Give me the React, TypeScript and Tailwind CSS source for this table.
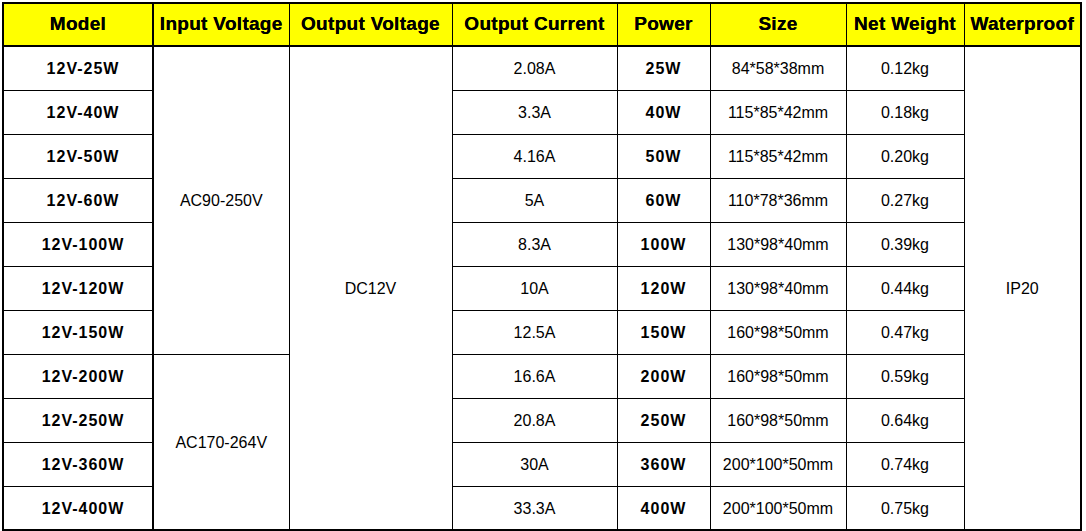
const rows = [
  { model: '12V-25W', current: '2.08A', power: '25W', size: '84*58*38mm', weight: '0.12kg' },
  { model: '12V-40W', current: '3.3A', power: '40W', size: '115*85*42mm', weight: '0.18kg' },
  { model: '12V-50W', current: '4.16A', power: '50W', size: '115*85*42mm', weight: '0.20kg' },
  { model: '12V-60W', current: '5A', power: '60W', size: '110*78*36mm', weight: '0.27kg' },
  { model: '12V-100W', current: '8.3A', power: '100W', size: '130*98*40mm', weight: '0.39kg' },
  { model: '12V-120W', current: '10A', power: '120W', size: '130*98*40mm', weight: '0.44kg' },
  { model: '12V-150W', current: '12.5A', power: '150W', size: '160*98*50mm', weight: '0.47kg' },
  { model: '12V-200W', current: '16.6A', power: '200W', size: '160*98*50mm', weight: '0.59kg' },
  { model: '12V-250W', current: '20.8A', power: '250W', size: '160*98*50mm', weight: '0.64kg' },
  { model: '12V-360W', current: '30A', power: '360W', size: '200*100*50mm', weight: '0.74kg' },
  { model: '12V-400W', current: '33.3A', power: '400W', size: '200*100*50mm', weight: '0.75kg' },
];

const headers = [
  'Model',
  'Input Voltage',
  'Output Voltage',
  'Output Current',
  'Power',
  'Size',
  'Net Weight',
  'Waterproof',
];

const cell = 'border border-black p-0 text-center align-middle';
const td = `${cell} pt-[2px]`;

export default function App() {
  return (
    <div className="h-[531px] w-[1086px] overflow-hidden bg-white pt-[2px] pl-[2px] font-['Liberation_Sans',Arial,sans-serif] text-black">
      <table className="w-[1078px] table-fixed border-collapse border-2 border-black">
        <colgroup>
          <col className="w-[150px]" />
          <col className="w-[136px]" />
          <col className="w-[163px]" />
          <col className="w-[165px]" />
          <col className="w-[93px]" />
          <col className="w-[136px]" />
          <col className="w-[118px]" />
          <col className="w-[117px]" />
        </colgroup>
        <thead>
          <tr className="h-[43px] bg-[#ffff00]">
            {headers.map((h, i) => (
              <th
                key={h}
                className={`${cell} border-b-2 text-[19px] font-bold tracking-[0.3px] whitespace-nowrap [text-shadow:0_0_0.6px_#000] ${
                  i === 0 ? 'border-r-2' : ''
                }`}
              >
                {h}
              </th>
            ))}
          </tr>
        </thead>
        <tbody className="text-[16px]">
          {rows.map((r, i) => (
            <tr key={r.model} className="h-[44px]">
              <td className={`${td} border-r-2 pl-[10px] font-bold tracking-[1px]`}>
                {r.model}
              </td>
              {i === 0 && (
                <td rowSpan={7} className={`${td} border-l-2`}>
                  AC90-250V
                </td>
              )}
              {i === 7 && (
                <td rowSpan={4} className={`${td} border-l-2`}>
                  AC170-264V
                </td>
              )}
              {i === 0 && (
                <td rowSpan={11} className={td}>
                  DC12V
                </td>
              )}
              <td className={td}>{r.current}</td>
              <td className={`${td} font-bold tracking-[1px]`}>{r.power}</td>
              <td className={td}>{r.size}</td>
              <td className={td}>{r.weight}</td>
              {i === 0 && (
                <td rowSpan={11} className={td}>
                  IP20
                </td>
              )}
            </tr>
          ))}
        </tbody>
      </table>
    </div>
  );
}
